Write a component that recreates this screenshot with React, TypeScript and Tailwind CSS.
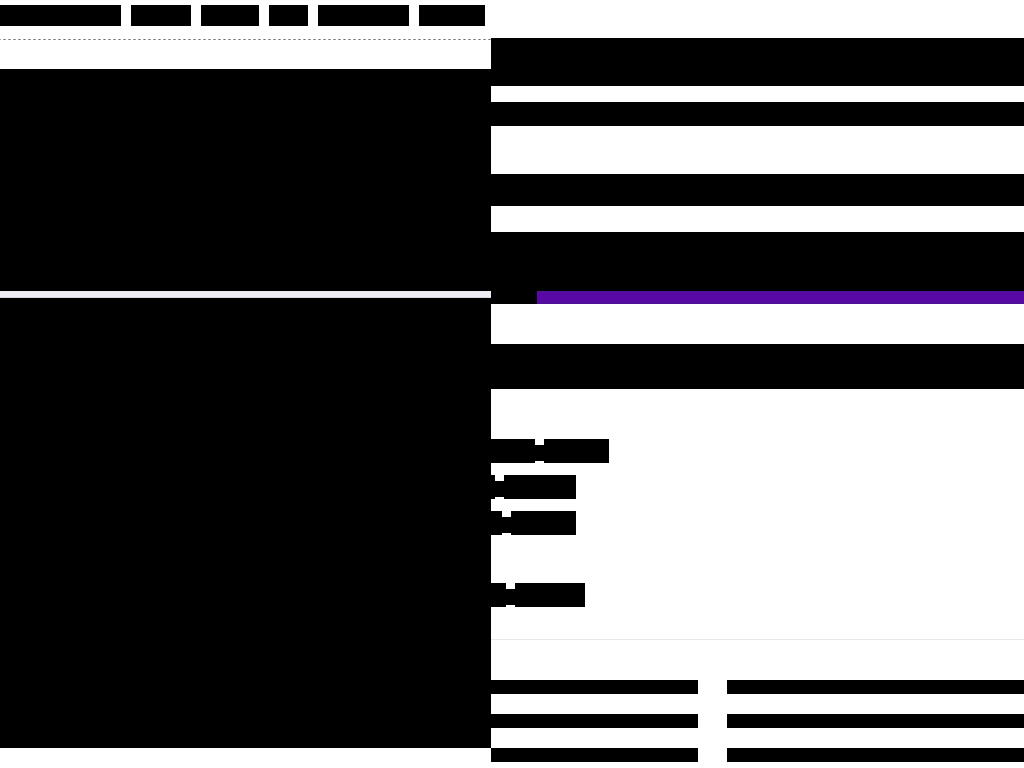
const tabs = ["w-[121px]", "w-[60px]", "w-[58px]", "w-[39px]", "w-[91px]", "w-[66px]"];

const entries = [
  { label: "w-[44px]", value: "w-[65px]", space: "mb-3" },
  { label: "w-[4px]", value: "w-[72px]", space: "mb-3" },
  { label: "w-[11px]", value: "w-[65px]", space: "mb-12" },
  { label: "w-[15px]", value: "w-[70px]", space: "mb-8" },
];

function Entry({ label, value, space }: { label: string; value: string; space: string }) {
  return (
    <div className={`flex h-6 ${space}`}>
      <div className={`bg-black ${label}`} />
      <div className="mt-[6px] mb-[2px] w-[9px] bg-black" />
      <div className={`bg-black ${value}`} />
    </div>
  );
}

function Lines() {
  return (
    <div className="flex flex-col gap-5">
      <div className="h-[14px] bg-black" />
      <div className="h-[14px] bg-black" />
      <div className="h-[14px] bg-black" />
    </div>
  );
}

export default function App() {
  return (
    <main className="flex min-h-screen items-start bg-white">
      <section className="w-[491px] shrink-0">
        <div className="flex gap-[10px] pt-[5px] pb-[13px]">
          {tabs.map((width) => (
            <div key={width} className={`h-[21px] bg-black ${width}`} />
          ))}
        </div>
        <div className="h-px bg-[repeating-linear-gradient(90deg,#a8a8a8_0px,#a8a8a8_1px,#ffffff_1px,#ffffff_3px,#a0a0a0_3px,#a0a0a0_4px,#707070_4px,#707070_5px)]" />
        <div className="mt-[29px] h-[222px] bg-black" />
        <div className="h-[7px] border-b border-[#d8d5e2] bg-[#eeecf4]" />
        <div className="h-[450px] bg-black" />
      </section>
      <section className="min-w-0 flex-1 pt-[38px]">
        <div className="h-12 bg-black" />
        <div className="mt-4 h-6 bg-black" />
        <div className="mt-12 h-8 bg-black" />
        <div className="mt-[26px] h-[59px] bg-black" />
        <div className="flex h-[13px] bg-black pl-[46px]">
          <div className="flex-1 border-y-2 border-[#50109a] bg-[#5908a6]" />
        </div>
        <div className="mt-10 mb-[50px] h-[45px] bg-black" />
        {entries.map((entry) => (
          <Entry key={entry.label} {...entry} />
        ))}
        <div className="mb-10 border-t border-[#e8e8e8]" />
        <div className="grid grid-cols-[207px_1fr] gap-x-[29px]">
          <Lines />
          <Lines />
        </div>
      </section>
    </main>
  );
}
